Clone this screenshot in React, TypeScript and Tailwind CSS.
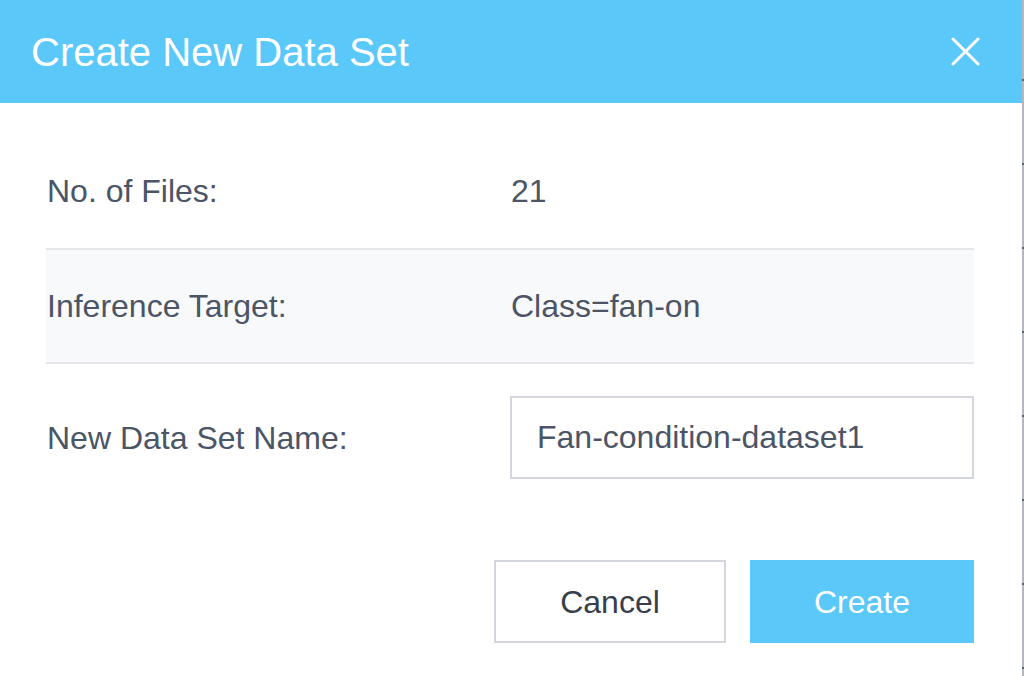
import { useState } from 'react';

const rows = [
  { label: 'No. of Files:', value: '21' },
  { label: 'Inference Target:', value: 'Class=fan-on' },
];

function CloseIcon() {
  return (
    <svg width="29" height="29" viewBox="0 0 29 29" fill="none" stroke="currentColor" strokeWidth="3" strokeLinecap="round">
      <path d="M2 2 L27 27" />
      <path d="M27 2 L2 27" />
    </svg>
  );
}

export default function App() {
  const [name, setName] = useState('Fan-condition-dataset1');

  return (
    <div className="flex w-[1024px] h-[676px] overflow-hidden bg-white font-['Liberation_Sans',Arial,sans-serif]">
      <div className="w-[1022px] flex flex-col">
        {/* header */}
        <div className="h-[103px] shrink-0 bg-[#5bc8fa] flex items-center justify-between pl-[31px] pr-[42px]">
          <h1 className="text-[40px] leading-none text-white">Create New Data Set</h1>
          <button className="text-white flex items-center justify-center">
            <CloseIcon />
          </button>
        </div>

        {/* body */}
        <div className="flex flex-col pl-[46px] pr-[48px] pt-[31px] text-[32px] leading-none">
          {rows.map((row, i) => (
            <div
              key={row.label}
              className={`grid grid-cols-[464px_1fr] items-center pl-px ${
                i === 0 ? 'h-[114px]' : 'h-[116px] bg-[#f8f9fb] border-y-2 border-[#e6e7eb]'
              }`}
            >
              <span className="text-[#4a5566]">{row.label}</span>
              <span className="text-[#4b5566]">{row.value}</span>
            </div>
          ))}

          <div className="grid grid-cols-[464px_1fr] items-center mt-[32px]">
            <span className="pl-px text-[#4a5566]">New Data Set Name:</span>
            <input
              value={name}
              onChange={(e) => setName(e.target.value)}
              className="w-full min-w-0 h-[83px] border-2 border-[#d3d7dd] px-[25px] text-[32px] text-[#4b5566] outline-none bg-white"
            />
          </div>

          <div className="flex justify-end gap-[24px] mt-[81px]">
            <button className="w-[232px] h-[83px] border-2 border-[#d3d7dd] bg-white text-[32px] text-[#373e4c]">
              Cancel
            </button>
            <button className="w-[224px] h-[83px] bg-[#5bc8fa] text-[32px] text-white">Create</button>
          </div>
        </div>
      </div>

      {/* sliver of the page behind the dialog */}
      <div className="w-[2px] h-full bg-[#b3b7bf] flex flex-col pt-[79px] gap-[82px]">
        {Array.from({ length: 8 }).map((_, i) => (
          <div key={i} className="h-[2px] bg-[#5d6372]" />
        ))}
      </div>
    </div>
  );
}
